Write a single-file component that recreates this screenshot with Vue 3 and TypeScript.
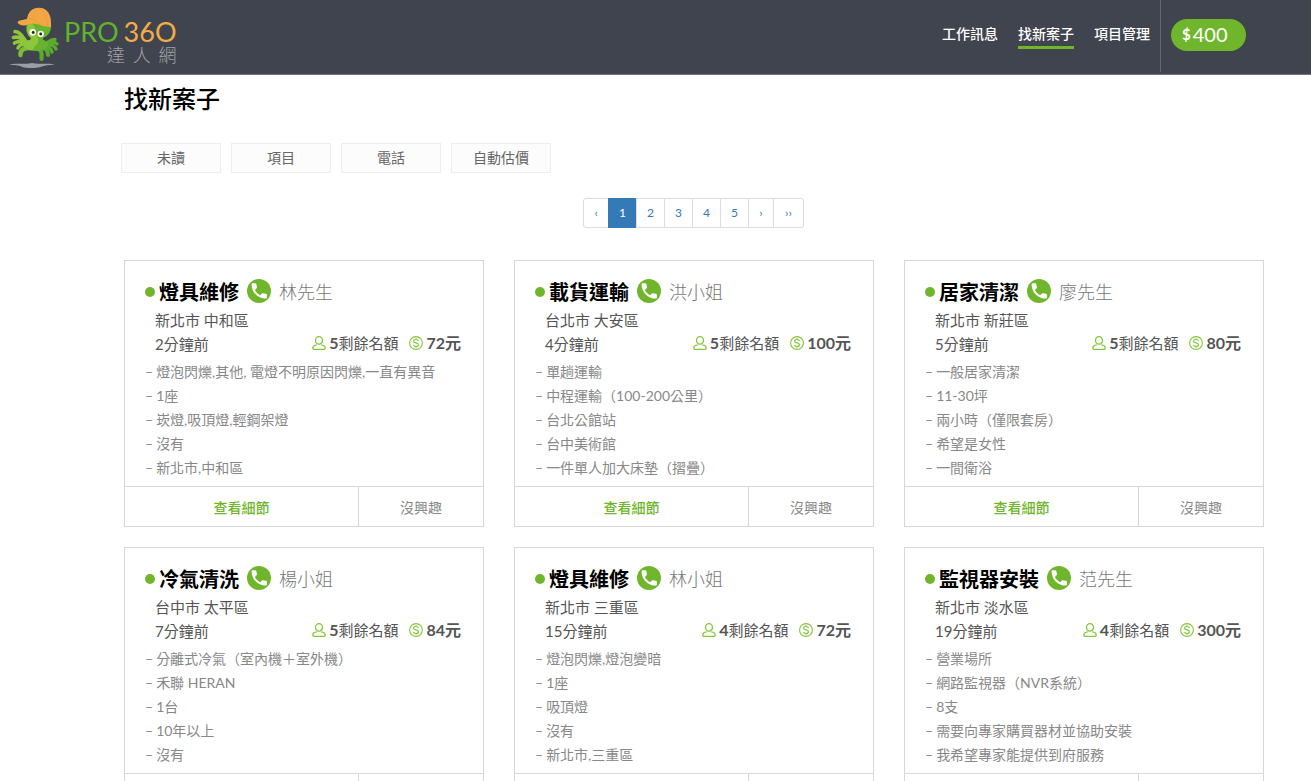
<script setup lang="ts">
interface Job {
  title: string
  name: string
  place: string
  time: string
  quota: number
  price: number
  details: string[]
}

const nav = [
  { label: '工作訊息', active: false },
  { label: '找新案子', active: true },
  { label: '項目管理', active: false },
]

const filters = ['未讀', '項目', '電話', '自動估價']
const pages = ['‹', '1', '2', '3', '4', '5', '›', '››']

const jobs: Job[] = [
  {
    title: '燈具維修', name: '林先生', place: '新北市 中和區', time: '2分鐘前', quota: 5, price: 72,
    details: ['燈泡閃爍,其他, 電燈不明原因閃爍,一直有異音', '1座', '崁燈,吸頂燈,輕鋼架燈', '沒有', '新北市,中和區'],
  },
  {
    title: '載貨運輸', name: '洪小姐', place: '台北市 大安區', time: '4分鐘前', quota: 5, price: 100,
    details: ['單趟運輸', '中程運輸（100-200公里）', '台北公館站', '台中美術館', '一件單人加大床墊（摺疊）'],
  },
  {
    title: '居家清潔', name: '廖先生', place: '新北市 新莊區', time: '5分鐘前', quota: 5, price: 80,
    details: ['一般居家清潔', '11-30坪', '兩小時（僅限套房）', '希望是女性', '一間衛浴'],
  },
  {
    title: '冷氣清洗', name: '楊小姐', place: '台中市 太平區', time: '7分鐘前', quota: 5, price: 84,
    details: ['分離式冷氣（室內機＋室外機）', '禾聯 HERAN', '1台', '10年以上', '沒有'],
  },
  {
    title: '燈具維修', name: '林小姐', place: '新北市 三重區', time: '15分鐘前', quota: 4, price: 72,
    details: ['燈泡閃爍,燈泡變暗', '1座', '吸頂燈', '沒有', '新北市,三重區'],
  },
  {
    title: '監視器安裝', name: '范先生', place: '新北市 淡水區', time: '19分鐘前', quota: 4, price: 300,
    details: ['營業場所', '網路監視器（NVR系統）', '8支', '需要向專家購買器材並協助安裝', '我希望專家能提供到府服務'],
  },
]
</script>

<template>
  <div class="page">
    <header class="topbar">
      <a class="brand" href="#" aria-label="PRO360 達人網">
        <svg class="mascot" viewBox="0 0 54 64" aria-hidden="true">
          <path d="M1 57.500C10 56 17 57.500 24 56C32 57.500 39 56 47 57.500C41 58.500 37 58 34 59.500C27 61.500 19 61.500 13 59.500C11 58 6 58.500 1 57.500Z" fill="#9b9fa4" />
          <g fill="none" stroke-linecap="round" stroke-linejoin="round">
            <path d="M20 36C15 34 15 25 7 24.500M18 36C14 32 11 29 5.500 30.500M18 37C14 34 10 34 6.500 36M19 38C15 37 11 38 10 41" stroke="#8fc63a" stroke-width="3.600" />
            <path d="M22 41C17 41 12 42 12.500 48" stroke="#7dbd34" stroke-width="4.400" />
            <path d="M35 37C40 37 41 32 47 32.500M36 38C41 35 45 34 49 37M36 39C41 37 46 38 48 42M36 40C40 40 43 41 44 45" stroke="#5cab2d" stroke-width="3.400" />
            <path d="M29 41C34 43 34 47 33.500 52M34 40C38 42 40 43 40 48" stroke="#58a92c" stroke-width="4.200" />
          </g>
          <path d="M19 15C17 22 19 29 23 31C24 34 15 33 15 38C16 43 24 44 29 44C36 44 41 41 40 36C39 33 34 34 35 31C41 29 44 23 43 16Z" fill="#67b32d" />
          <path d="M20 18C18 24 20 29 23 31C24 34 15 33 15 38C16 42 21 43 25 43C26 38 32 37 30 31C27 27 29 20 24 17Z" fill="#8dc73c" />
          <circle cx="24.700" cy="25.300" r="3.400" fill="#f5f8ee" />
          <circle cx="32.700" cy="27" r="3.200" fill="#f5f8ee" />
          <circle cx="25.200" cy="25.500" r="1.400" fill="#252525" />
          <circle cx="32.700" cy="27" r="1.400" fill="#252525" />
          <path d="M19 12C20 5 24 1 31 .8C39 1 44 7 43 20C38 20 34 19 31 17.500C26 16 23 17 19 18C15 19 11 18 9.500 15.500C10 13 16 13 19 12Z" fill="#f3a744" />
          <path d="M20 12C26 11 28 14 31 17M31 1C37 5 40 12 39 19M31 1C27 4 25 8 25 11" stroke="#e69a3c" stroke-width=".7" fill="none" />
        </svg>
        <span class="wordmark">
          <span class="latin"><span>PRO</span><span class="num">36O</span></span>
          <span class="cjk"><span>達</span><span>人</span><span>網</span></span>
        </span>
      </a>
      <nav class="nav">
        <a v-for="item in nav" :key="item.label" href="#" :class="{ active: item.active }">{{ item.label }}</a>
      </nav>
      <div class="wallet">
        <a class="pill" href="#"><b>$</b><span>400</span></a>
      </div>
    </header>

    <main class="content">
      <h1>找新案子</h1>
      <div class="filters">
        <button v-for="f in filters" :key="f" type="button">{{ f }}</button>
      </div>
      <nav class="pagination" aria-label="分頁">
        <a v-for="p in pages" :key="p" href="#" :class="{ current: p === '1' }">{{ p }}</a>
      </nav>
      <section class="grid">
        <article v-for="(job, i) in jobs" :key="i" class="card">
          <div class="body">
            <div class="heading">
              <span class="dot"></span>
              <h2>{{ job.title }}</h2>
              <svg class="phone" viewBox="0 0 24 24" aria-hidden="true">
                <circle cx="12" cy="12" r="12" fill="#70b62c" />
                <path d="M4.600 5.400C4.600 4.700 5.100 4.200 5.800 4.200H8.300C8.900 4.200 9.300 4.600 9.400 5.200L9.900 8.300C10 8.700 9.900 9 9.600 9.300L7.900 11C9.100 13.400 10.900 15 13.200 16.200L14.900 14.500C15.200 14.200 15.500 14.100 15.900 14.200L18.900 14.700C19.500 14.800 19.900 15.200 19.900 15.800V18.400C19.900 19.100 19.400 19.600 18.700 19.600C11 19.600 4.600 13.200 4.600 5.400Z" fill="#fff" />
              </svg>
              <span class="name">{{ job.name }}</span>
            </div>
            <p class="place">{{ job.place }}</p>
            <div class="meta">
              <span class="time">{{ job.time }}</span>
              <span class="stats">
                <span class="stat">
                  <svg viewBox="0 0 14 14" aria-hidden="true">
                    <g fill="none" stroke="#83c63b" stroke-width="1.300">
                      <ellipse cx="7" cy="4.400" rx="3.500" ry="3.700" />
                      <path d="M4.800 8.800C2.200 9 .8 10 .8 12.200C.8 13 1.200 13.300 2 13.300H12C12.800 13.300 13.200 13 13.200 12.200C13.200 10 11.800 9 9.200 8.800" />
                    </g>
                  </svg>
                  <span><b>{{ job.quota }}</b>剩餘名額</span>
                </span>
                <span class="stat">
                  <svg viewBox="0 0 14 14" aria-hidden="true">
                    <g fill="none" stroke="#83c63b">
                      <circle cx="7" cy="7" r="6.400" stroke-width="1.100" />
                      <path d="M9.500 5C9.200 3.900 8.200 3.500 7 3.500C5.600 3.500 4.600 4.200 4.600 5.200C4.600 7.600 9.500 6.300 9.500 8.800C9.500 9.800 8.500 10.500 7 10.500C5.700 10.500 4.700 10 4.500 8.900M7 2.200V3.500M7 10.500V11.800" stroke-width="1.200" />
                    </g>
                  </svg>
                  <b>{{ job.price }}元</b>
                </span>
              </span>
            </div>
            <ul>
              <li v-for="d in job.details" :key="d"><span>–</span><span>{{ d }}</span></li>
            </ul>
          </div>
          <footer>
            <button type="button" class="view">查看細節</button>
            <button type="button" class="skip">沒興趣</button>
          </footer>
        </article>
      </section>
    </main>
  </div>
</template>

<style>
body {
  margin: 0;
  background: #fff;
}
</style>

<style scoped>
.page {
  font-family: Lato, "Noto Sans CJK TC", sans-serif;
  font-size: 14px;
  line-height: 24px;
  color: #888;
}
.page * {
  box-sizing: border-box;
}
a {
  text-decoration: none;
}
button {
  font: inherit;
  color: inherit;
  padding: 0;
  cursor: pointer;
}
h1, h2, p, ul {
  margin: 0;
  padding: 0;
}

.topbar {
  display: flex;
  height: 75px;
  padding: 0 65px 0 8px;
  background: #40444e;
  border-bottom: 1px solid #73767a;
}
.brand {
  display: flex;
  margin-right: auto;
  padding-top: 7px;
  gap: 2px;
}
.mascot {
  width: 54px;
  height: 64px;
}
.wordmark {
  padding-top: 11px;
}
.latin {
  display: flex;
  gap: 5px;
  font-size: 27px;
  line-height: 27px;
  color: #62b32e;
}
.num {
  color: #f3ad48;
}
.cjk {
  display: flex;
  justify-content: space-between;
  margin-left: 43px;
  font-size: 18px;
  line-height: 20px;
  font-weight: 300;
  color: #a0a2a6;
}
.nav {
  display: flex;
  gap: 20px;
  padding: 22px 10px 0 0;
}
.nav a {
  height: 27px;
  color: #fff;
  font-weight: 500;
}
.nav .active {
  border-bottom: 3px solid #70b62c;
}
.wallet {
  height: 72px;
  padding: 19px 0 0 10px;
  border-left: 1px solid #666963;
}
.pill {
  display: flex;
  align-items: center;
  gap: 2px;
  width: 75px;
  height: 32px;
  padding: 0 12px 2px 11px;
  border-radius: 16px;
  background: #70b62c;
  color: #fff;
  font-size: 20px;
}
.pill b {
  font-size: 15px;
}

.content {
  padding: 8px 47px 20px 124px;
}
h1 {
  font-size: 24px;
  line-height: 32px;
  font-weight: 500;
  color: #000;
}
.filters {
  display: flex;
  gap: 10px;
  margin: 28px 0 0 -3px;
}
.filters button {
  width: 100px;
  height: 30px;
  border: 1px solid #eee;
  background: #fcfcfc;
  color: #666;
}
.pagination {
  display: flex;
  justify-content: center;
  margin: 25px 0 32px;
  font-size: 12px;
  line-height: 18px;
}
.pagination a {
  min-width: 26px;
  padding: 5px 10px;
  margin-left: -1px;
  border: 1px solid #ddd;
  color: #337ab7;
  text-align: center;
}
.pagination a:first-child {
  border-radius: 3px 0 0 3px;
}
.pagination a:last-child {
  min-width: 31px;
  border-radius: 0 3px 3px 0;
}
.pagination .current {
  background: #337ab7;
  border-color: #337ab7;
  color: #fff;
}

.grid {
  display: grid;
  grid-template-columns: repeat(3, 1fr);
  gap: 20px 30px;
}
.card {
  border: 1px solid #d8d8d8;
}
.body {
  padding: 16px 22px 6px 20px;
}
.heading {
  display: flex;
  align-items: center;
  height: 28px;
}
.dot {
  width: 10px;
  height: 10px;
  margin: 2px 4px 0 0;
  border-radius: 50%;
  background: #70b62c;
}
h2 {
  padding-top: 2px;
  font-size: 20px;
  line-height: 28px;
  font-weight: 700;
  color: #000;
}
.phone {
  width: 24px;
  height: 24px;
  margin: 0 8px;
}
.name {
  padding-top: 2px;
  font-size: 18px;
  line-height: 28px;
  font-weight: 300;
  color: #777;
}
.place, .meta {
  padding-left: 10px;
  font-size: 15px;
  color: #555;
}
.place {
  margin-top: 3px;
}
.meta {
  display: flex;
  justify-content: space-between;
}
.stats {
  display: flex;
  gap: 11px;
  height: 22px;
}
.stat {
  display: flex;
  align-items: center;
  gap: 3px;
}
.stat b {
  font-size: 16px;
}
.stat svg {
  width: 14px;
  height: 14px;
}
ul {
  margin-top: 4px;
  list-style: none;
}
li {
  display: flex;
  gap: 3px;
}
footer {
  display: grid;
  grid-template-columns: 234px 1fr;
  height: 40px;
  border-top: 1px solid #d8d8d8;
}
footer button {
  padding-top: 2px;
  border: 0;
  background: none;
}
footer .view {
  border-right: 1px solid #d8d8d8;
  color: #70b62c;
  font-weight: 500;
}
</style>
